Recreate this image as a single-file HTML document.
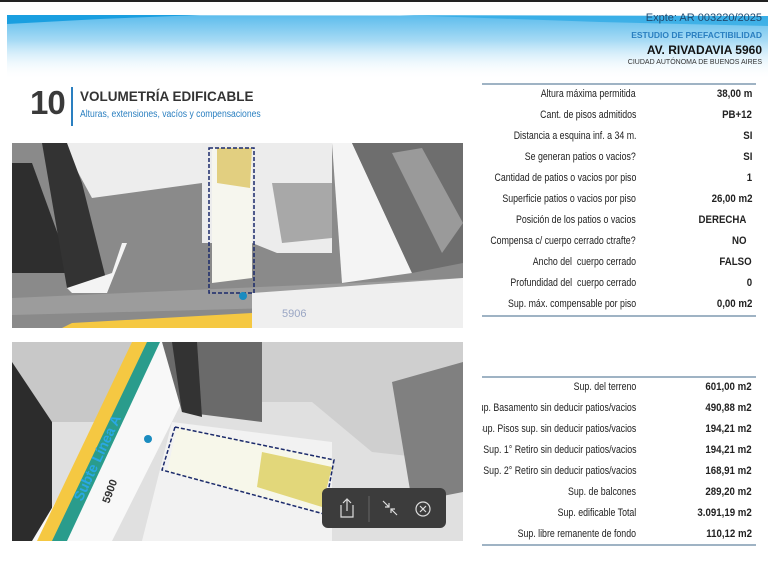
<!DOCTYPE html>
<html><head><meta charset="utf-8"><style>
*{margin:0;padding:0;box-sizing:border-box}
body{width:768px;height:576px;background:#fff;position:relative;overflow:hidden;font-family:"Liberation Sans",sans-serif}
.abs{position:absolute}
.hdr{right:6px;text-align:right;white-space:nowrap;font-family:"Liberation Sans",sans-serif}
.tbl{position:absolute;overflow:hidden}
.row{position:absolute;left:0;width:276px;height:14px;font-size:11px;color:#222}
.row .l{position:absolute;right:122px;white-space:nowrap;transform:scaleX(0.8);transform-origin:right center}
.row .v{position:absolute;right:6px;font-weight:bold;white-space:nowrap;transform:scaleX(0.88);transform-origin:right center}
.line{position:absolute;left:482px;width:274px;height:2px;background:#9fb3c4}
</style></head><body>
<div class="abs" style="left:0;top:0;width:768px;height:2px;background:#222"></div>
<svg class="abs" style="left:0;top:0" width="768" height="80">
<defs><linearGradient id="g" x1="0" y1="0" x2="0" y2="1"><stop offset="0" stop-color="#5cbcec"/><stop offset="0.4" stop-color="#a8dbf5"/><stop offset="1" stop-color="#fff" stop-opacity="0"/></linearGradient></defs>
<path d="M7 15 L768 16 L768 80 L7 80 Z" fill="url(#g)"/>
<path d="M7 15 L200 15 L100 19 L7 24 Z" fill="#1a9fe0"/>
<path d="M400 15 L768 16 L768 26 L600 22 Z" fill="#2aa8e4" opacity="0.7"/>
</svg>
<div class="abs hdr" style="top:12px;font-size:11px;color:#1f4a70">Expte: AR 003220/2025</div>
<div class="abs hdr" style="top:30px;font-size:8.5px;color:#2a7fc0;font-weight:bold">ESTUDIO DE PREFACTIBILIDAD</div>
<div class="abs hdr" style="top:43px;font-size:12px;color:#111;font-weight:bold">AV. RIVADAVIA 5960</div>
<div class="abs hdr" style="top:59px;font-size:7px;color:#333">CIUDAD AUTÓNOMA DE BUENOS AIRES</div>

<div class="abs" style="left:30px;top:84px;font-size:33px;font-weight:bold;color:#3a3a3a;letter-spacing:-1px">10</div>
<div class="abs" style="left:71px;top:87px;width:2px;height:39px;background:#2a7fc0"></div>
<div class="abs" style="left:80px;top:89px;font-size:13.5px;font-weight:bold;color:#333">VOLUMETRÍA EDIFICABLE</div>
<div class="abs" style="left:80px;top:109px;font-size:10px;color:#2a7fc0;transform:scaleX(0.86);transform-origin:left">Alturas, extensiones, vacíos y compensaciones</div>

<!-- image 1 -->
<svg class="abs" style="left:12px;top:143px" width="451" height="185" viewBox="0 0 451 185">
<rect width="451" height="185" fill="#8a8a8a"/>
<polygon points="50,0 190,0 190,40 80,55" fill="#ededed"/>
<polygon points="190,0 320,0 320,110 265,110 240,100 190,100" fill="#ececec"/>
<polygon points="260,40 320,40 320,95 270,100" fill="#a8a8a8"/>
<polygon points="0,20 20,20 60,130 0,130" fill="#2e2e2e"/>
<polygon points="30,0 55,0 70,40 95,140 55,145" fill="#333"/>
<polygon points="55,145 100,130 110,100 115,100 95,150 60,150" fill="#f4f4f4"/>
<polygon points="320,0 340,0 400,130 330,140" fill="#f4f4f4"/>
<polygon points="340,0 451,0 451,120 400,130" fill="#6e6e6e"/>
<polygon points="380,10 410,5 451,80 430,110" fill="#9a9a9a"/>
<polygon points="0,155 451,135 451,160 0,172" fill="#9c9c9c"/>
<polygon points="240,150 451,135 451,185 240,185" fill="#efefef"/>
<polygon points="60,180 240,170 240,185 50,185" fill="#f5c842"/>
<polygon points="200,5 240,5 240,135 200,140" fill="#f6f6ee"/>
<polygon points="205,5 240,5 238,45 205,40" fill="#e2cf80"/>
<rect x="197" y="5" width="45" height="145" fill="none" stroke="#1b2a6b" stroke-width="1.5" stroke-dasharray="4,2"/>
<circle cx="231" cy="153" r="4" fill="#1a8cc0"/>
<text x="270" y="174" font-size="11" fill="#9aa6c4">5906</text>
</svg>

<!-- image 2 -->
<svg class="abs" style="left:12px;top:342px" width="451" height="199" viewBox="0 0 451 199">
<rect width="451" height="199" fill="#e0e0e0"/>
<polygon points="0,0 120,0 90,80 0,80" fill="#c8c8c8"/>
<polygon points="0,20 40,80 40,199 0,199" fill="#2c2c2c"/>
<polygon points="140,0 200,0 100,199 20,199" fill="#f8f8f8"/>
<polygon points="120,0 145,0 50,199 25,199" fill="#f5c842"/>
<polygon points="135,0 148,0 55,199 40,199" fill="#2a9c8c"/>
<text x="0" y="0" font-size="14" font-weight="bold" fill="#2aa8e4" transform="translate(70,160) rotate(-65)">Subte Línea A</text>
<text x="0" y="0" font-size="11" font-weight="bold" fill="#333" transform="translate(97,162) rotate(-70)">5900</text>
<polygon points="150,0 250,0 250,80 170,70" fill="#6a6a6a"/>
<polygon points="160,0 185,0 190,75 170,70" fill="#333"/>
<polygon points="250,0 451,0 451,120 360,110 300,60 250,60" fill="#cfcfcf"/>
<polygon points="380,40 451,20 451,150 400,160" fill="#808080"/>
<polygon points="160,80 320,100 320,199 130,199" fill="#f2f2f2"/>
<polygon points="165,85 320,118 310,170 155,130" fill="#f7f7ea"/>
<polygon points="250,110 320,125 310,165 245,145" fill="#e2d77a"/>
<polygon points="163,85 322,118 312,172 150,128 Z" fill="none" stroke="#1b2a6b" stroke-width="1.5" stroke-dasharray="4,2"/>
<circle cx="136" cy="97" r="4" fill="#1a8cc0"/>
<rect x="310" y="146" width="124" height="40" rx="6" fill="#3c3c3c"/>
<path d="M329 163 v12 h12 v-12 M335 158 v11 M331 161 l4 -4 l4 4" fill="none" stroke="#ddd" stroke-width="1.2"/>
<line x1="357" y1="154" x2="357" y2="180" stroke="#666"/>
<path d="M371 159 l6 6 M377 161 v4 h-4 M385 173 l-6 -6 M379 171 v-4 h4" fill="none" stroke="#ddd" stroke-width="1.2"/>
<circle cx="411" cy="167" r="7" fill="none" stroke="#ddd" stroke-width="1.2"/>
<path d="M408 164 l6 6 M414 164 l-6 6" stroke="#ddd" stroke-width="1.2"/>
</svg>

<div class="line" style="top:83px"></div>
<div class="tbl" style="top:0;height:330px;left:462px;width:306px">
<div class="row" style="top:88px;left:20px"><span class="l">Altura máxima permitida</span><span class="v">38,00 m</span></div>
<div class="row" style="top:109px;left:20px"><span class="l">Cant. de pisos admitidos</span><span class="v">PB+12</span></div>
<div class="row" style="top:130px;left:20px"><span class="l">Distancia a esquina inf. a 34 m.</span><span class="v">SI</span></div>
<div class="row" style="top:151px;left:20px"><span class="l">Se generan patios o vacios?</span><span class="v">SI</span></div>
<div class="row" style="top:172px;left:20px"><span class="l">Cantidad de patios o vacios por piso</span><span class="v">1</span></div>
<div class="row" style="top:193px;left:20px"><span class="l">Superficie patios o vacios por piso</span><span class="v">26,00 m2</span></div>
<div class="row" style="top:214px;left:20px"><span class="l">Posición de los patios o vacios</span><span class="v" style="right:12px">DERECHA</span></div>
<div class="row" style="top:235px;left:20px"><span class="l">Compensa c/ cuerpo cerrado ctrafte?</span><span class="v" style="right:12px">NO</span></div>
<div class="row" style="top:256px;left:20px"><span class="l">Ancho del &nbsp;cuerpo cerrado</span><span class="v">FALSO</span></div>
<div class="row" style="top:277px;left:20px"><span class="l">Profundidad del &nbsp;cuerpo cerrado</span><span class="v">0</span></div>
<div class="row" style="top:298px;left:20px"><span class="l">Sup. máx. compensable por piso</span><span class="v">0,00 m2</span></div>
</div>
<div class="line" style="top:315px"></div>

<div class="line" style="top:376px"></div>
<div class="tbl" style="top:370px;height:180px;left:482px;width:286px">
<div class="row" style="top:11px"><span class="l">Sup. del terreno</span><span class="v">601,00 m2</span></div>
<div class="row" style="top:32px"><span class="l">Sup. Basamento sin deducir patios/vacios</span><span class="v">490,88 m2</span></div>
<div class="row" style="top:53px"><span class="l">Sup. Pisos sup. sin deducir patios/vacios</span><span class="v">194,21 m2</span></div>
<div class="row" style="top:74px"><span class="l">Sup. 1° Retiro sin deducir patios/vacios</span><span class="v">194,21 m2</span></div>
<div class="row" style="top:95px"><span class="l">Sup. 2° Retiro sin deducir patios/vacios</span><span class="v">168,91 m2</span></div>
<div class="row" style="top:116px"><span class="l">Sup. de balcones</span><span class="v">289,20 m2</span></div>
<div class="row" style="top:137px"><span class="l">Sup. edificable Total</span><span class="v">3.091,19 m2</span></div>
<div class="row" style="top:158px"><span class="l">Sup. libre remanente de fondo</span><span class="v">110,12 m2</span></div>
</div>
<div class="line" style="top:544px"></div>
</body></html>
